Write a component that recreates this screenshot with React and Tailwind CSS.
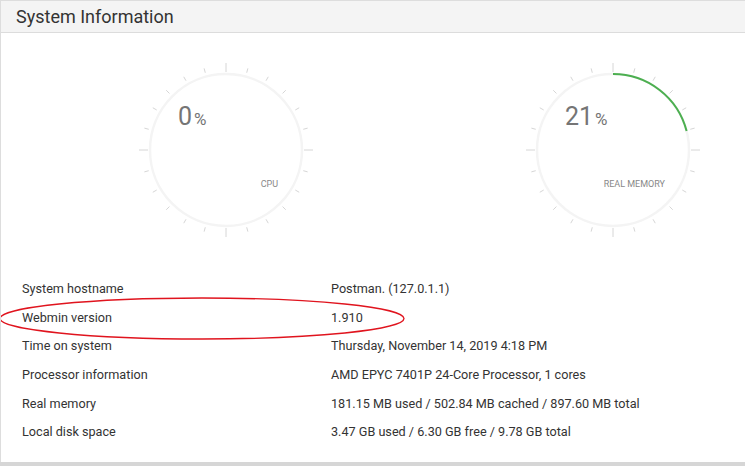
const rows = [
  ["System hostname", "Postman. (127.0.1.1)"],
  ["Webmin version", "1.910"],
  ["Time on system", "Thursday, November 14, 2019 4:18 PM"],
  ["Processor information", "AMD EPYC 7401P 24-Core Processor, 1 cores"],
  ["Real memory", "181.15 MB used / 502.84 MB cached / 897.60 MB total"],
  ["Local disk space", "3.47 GB used / 6.30 GB free / 9.78 GB total"],
];

const Gauge = ({ value, label }) => {
  const ticks = [];
  for (let i = 0; i < 24; i++) {
    const a = (i * 15 * Math.PI) / 180;
    const major = i % 6 === 0;
    const r1 = major ? 78 : 80;
    const r2 = major ? 87 : 84.5;
    ticks.push(
      <line
        key={i}
        x1={90 + r1 * Math.sin(a)}
        y1={90 - r1 * Math.cos(a)}
        x2={90 + r2 * Math.sin(a)}
        y2={90 - r2 * Math.cos(a)}
        stroke="#d6d6d6"
        strokeWidth="1"
      />
    );
  }
  const end = (value / 100) * 2 * Math.PI;
  const ex = 90 + 76 * Math.sin(end);
  const ey = 90 - 76 * Math.cos(end);

  return (
    <div className="relative w-[180px] h-[180px]">
      <svg width="180" height="180" viewBox="0 0 180 180">
        <circle cx="90" cy="90" r="76" fill="none" stroke="#f4f4f4" strokeWidth="2.5" />
        {value > 0 && (
          <path
            d={`M 90 14 A 76 76 0 ${value > 50 ? 1 : 0} 1 ${ex} ${ey}`}
            fill="none"
            stroke="#4caf50"
            strokeWidth="2"
          />
        )}
        {ticks}
      </svg>
      <div className="absolute left-[42px] top-[44px] flex items-baseline text-[#757575]">
        <span className="text-[25px] leading-none">{value}</span>
        <span className="text-[17px] leading-none ml-[2px]">%</span>
      </div>
      <div className="absolute right-[38px] top-[118px] text-[9px] text-[#888] uppercase">{label}</div>
    </div>
  );
};

const App = () => {
  return (
    <div className="w-[745px] h-[466px] bg-[#d6d6d6] font-['Roboto',sans-serif] overflow-hidden">
      <div className="relative h-[462px] bg-white border-t border-l border-[#dddddd]">
        <div className="h-[32px] bg-[#f4f4f4] border-b border-[#dcdcdc] flex items-center pl-[15px]">
          <h2 className="text-[18px] text-[#333] leading-none">System Information</h2>
        </div>

        <div className="flex pl-[135px] gap-[207px] mt-[27px]">
          <Gauge value={0} label="CPU" />
          <Gauge value={21} label="Real memory" />
        </div>

        <div className="mt-[35px] flex flex-col">
          {rows.map(([k, v]) => (
            <div key={k} className="flex h-[28.7px] items-center text-[12.65px] text-[#333]">
              <div className="w-[330px] pl-[21px]">{k}</div>
              <div>{v}</div>
            </div>
          ))}
        </div>

        <svg className="absolute left-0 top-[294px]" width="410" height="48" viewBox="0 0 410 48">
          <ellipse cx="201" cy="23.5" rx="202" ry="20.5" fill="none" stroke="#e0141e" strokeWidth="1.4" />
        </svg>
      </div>
    </div>
  );
};

export default App;
